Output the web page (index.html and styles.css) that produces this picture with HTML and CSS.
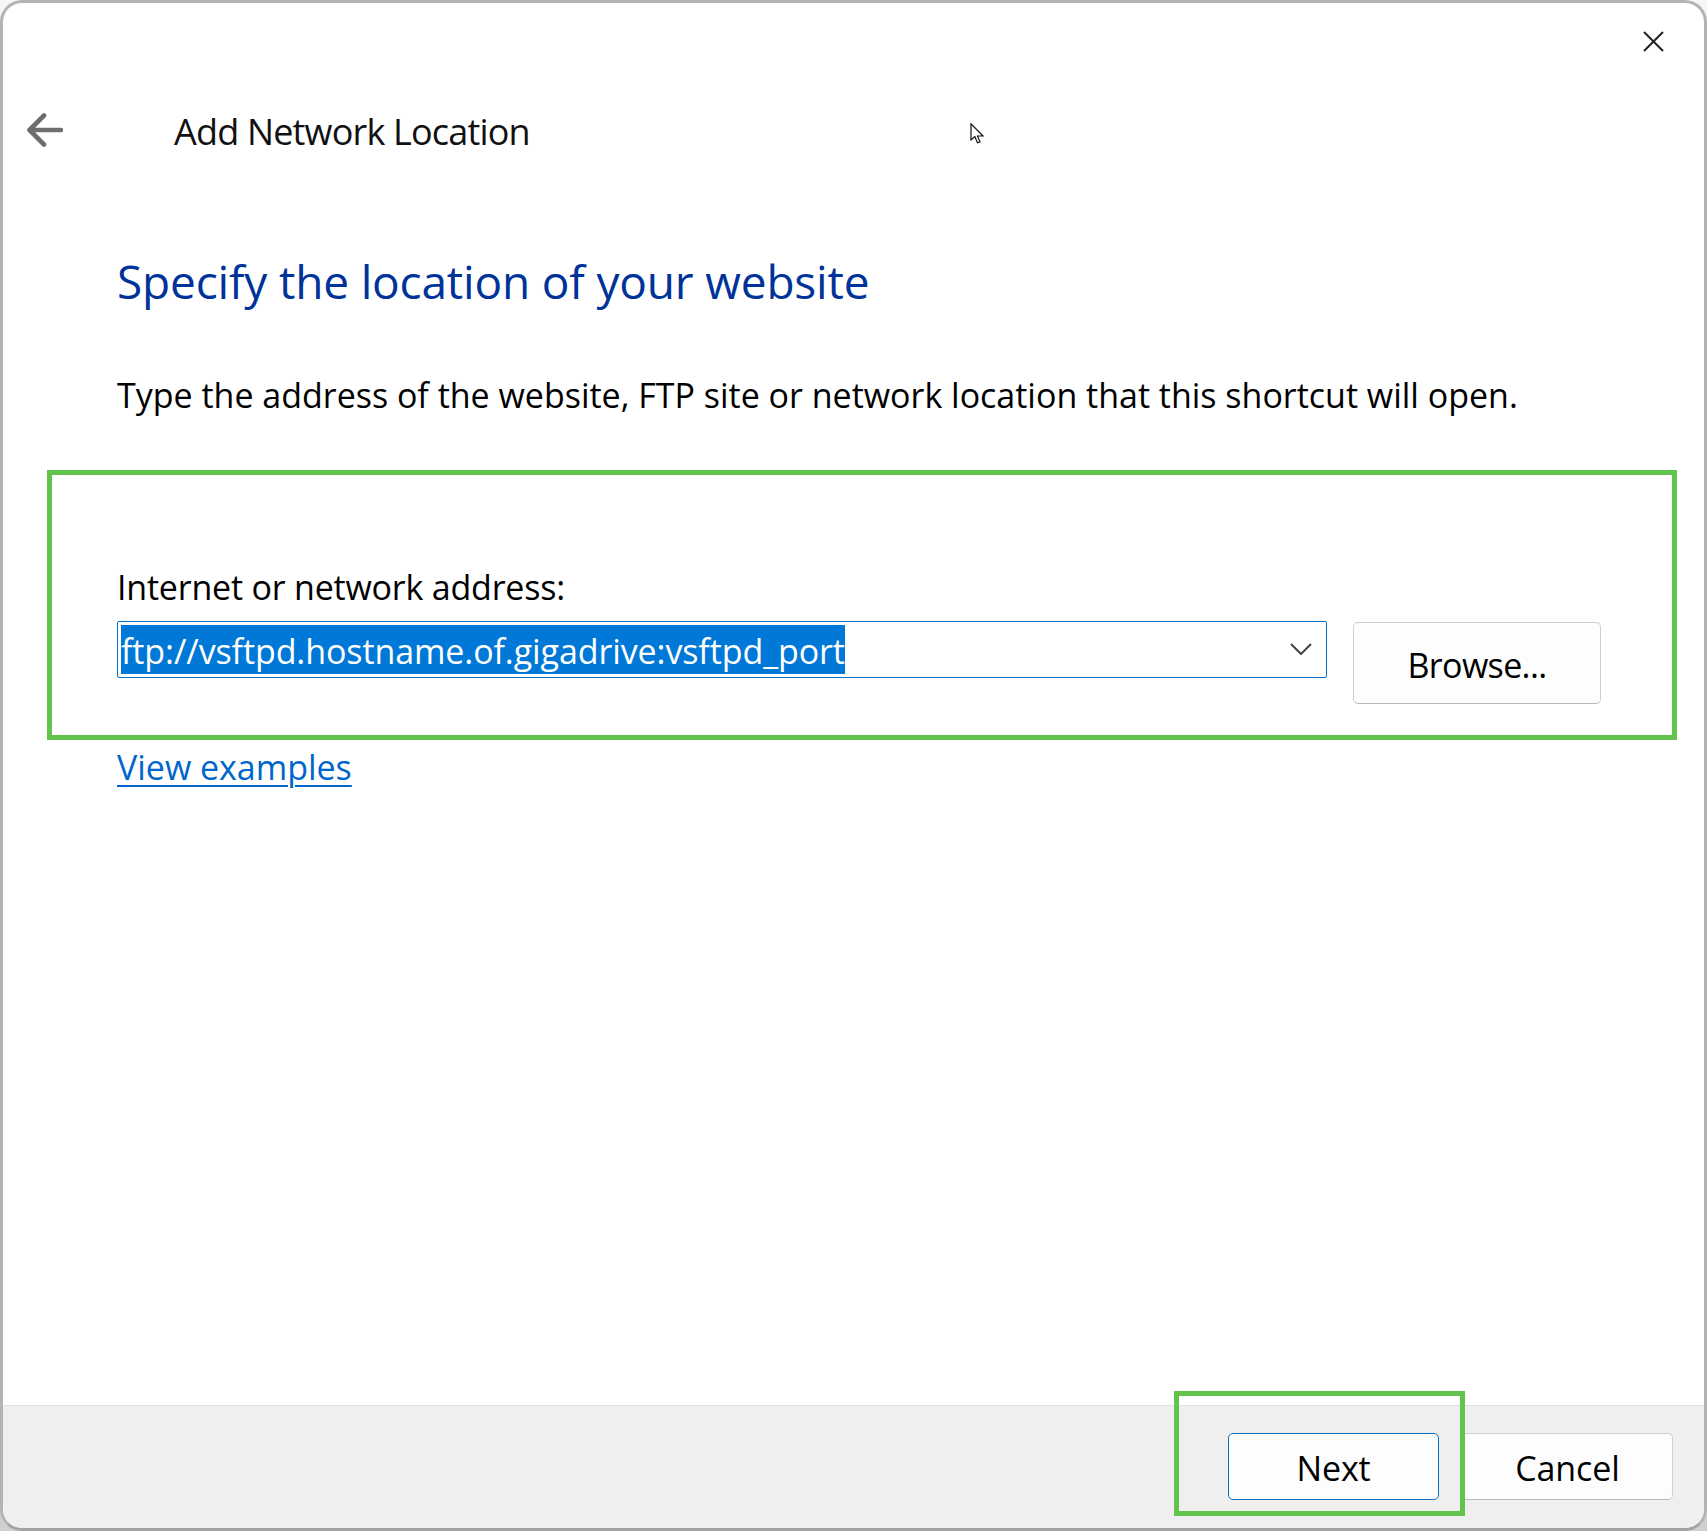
FILE: index.html
```html
<!DOCTYPE html>
<html lang="en">
<head>
<meta charset="utf-8">
<title>Add Network Location</title>
<link rel="stylesheet" href="styles.css">
</head>
<body>
<div class="window">
  <div class="titlebar">
    <svg class="close-icon" width="21" height="21" viewBox="0 0 21 21"><path d="M1 1 L20 20 M20 1 L1 20"/></svg>
  </div>
  <div class="nav">
    <svg class="back-icon" width="36" height="34" viewBox="0 0 36 34"><path d="M34 17 H3 M17 2.500 L2.500 17 L17 31.500"/></svg>
    <span class="nav-title">Add Network Location</span>
  </div>
  <main class="content">
    <h1 class="heading">Specify the location of your website</h1>
    <p class="intro">Type the address of the website, FTP site or network location that this shortcut will open.</p>
    <label class="field-label">Internet or network address:</label>
    <div class="address-row">
      <div class="combo">
        <span class="combo-text">ftp://vsftpd.hostname.of.gigadrive:vsftpd_port</span>
        <svg class="chevron" width="22" height="12" viewBox="0 0 22 12"><path d="M1 1 L11 11 L21 1"/></svg>
      </div>
      <button class="btn btn-browse">Browse...</button>
    </div>
    <a class="examples" href="#">View examples</a>
  </main>
  <footer class="footer">
    <button class="btn btn-footer btn-default">Next</button>
    <button class="btn btn-footer">Cancel</button>
  </footer>
</div>
<div class="mark mark-address"></div>
<div class="mark mark-next"></div>
<svg class="cursor" width="15" height="21" viewBox="0 0 15 21"><path d="M1 .8 V17 L4.800 13.500 L7.500 19.800 L10 18.800 L7.500 13 H13 Z"/></svg>
</body>
</html>
```
FILE: styles.css
```css
* { box-sizing: border-box; }
html, body { margin: 0; padding: 0; }
body {
  width: 1707px;
  height: 1531px;
  position: relative;
  overflow: hidden;
  background: linear-gradient(#f6f6f6, #f6f6f6 60px, #cfcfcf 1470px);
  font-family: "Open Sans", "Noto Sans", sans-serif;
  color: #000;
}
.window {
  width: 1707px;
  height: 1531px;
  display: flex;
  flex-direction: column;
  background: #fff;
  border: 3px solid #b4b4b4;
  border-bottom-color: #a2a2a2;
  border-radius: 22px;
  overflow: hidden;
}
.titlebar {
  height: 102px;
  flex: none;
  display: flex;
  justify-content: flex-end;
  padding: 28px 40px 0 0;
}
.close-icon { display: block; }
.close-icon path { stroke: #222; stroke-width: 2; fill: none; }
.nav {
  height: 50px;
  flex: none;
  display: flex;
  align-items: center;
  padding-left: 24px;
  gap: 111px;
}
.back-icon { display: block; }
.back-icon path { stroke: #6e6e6e; stroke-width: 4.600; fill: none; stroke-linecap: round; stroke-linejoin: round; }
.nav-title { font-size: 36px; line-height: 50px; letter-spacing: -0.82px; color: #111; padding-top: 4px; }
.content { flex: 1; padding-left: 114px; display: flex; flex-direction: column; align-items: flex-start; }
.heading {
  margin: 96px 0 0;
  font-size: 46px;
  line-height: 60px;
  font-weight: 400;
  color: #003399;
  letter-spacing: -0.17px;
}
.intro { margin: 60px 0 0; font-size: 34px; line-height: 48px; letter-spacing: -0.01px; white-space: nowrap; }
.field-label { margin-top: 145px; font-size: 34px; line-height: 46px; letter-spacing: -0.21px; }
.address-row { margin-top: 11px; display: flex; align-items: flex-start; gap: 26px; }
.combo {
  width: 1210px;
  height: 57px;
  border: 1.500px solid #0a6fc2;
  border-radius: 2px;
  background: #fff;
  display: flex;
  align-items: center;
  justify-content: space-between;
  padding: 0 14px 1px 3px;
}
.combo-text {
  display: block;
  height: 49px;
  line-height: 52px;
  background: #0078d7;
  color: #fff;
  font-size: 34px;
  letter-spacing: -0.1px;
  white-space: nowrap;
}
.chevron { display: block; margin-top: 0; }
.chevron path { stroke: #444; stroke-width: 2; fill: none; }
.btn {
  font-family: inherit;
  color: #000;
  background: #fdfdfd;
  border: 1.500px solid #cfcfcf;
  border-bottom-color: #b8b8b8;
  border-radius: 5px;
  padding: 0;
  font-size: 34px;
  letter-spacing: -0.1px;
}
.btn-browse { width: 248px; height: 82px; margin-top: 1px; padding-top: 4px; letter-spacing: -0.65px; }
.examples {
  margin-top: 40px;
  font-size: 34px;
  line-height: 46px;
  letter-spacing: -0.02px;
  color: #0066cc;
  text-decoration: underline;
  text-decoration-thickness: 2px;
  text-underline-offset: 5px;
}
.footer {
  height: 123px;
  flex: none;
  display: flex;
  justify-content: flex-end;
  align-items: flex-start;
  gap: 23px;
  padding: 27px 31px 0 0;
  background: #efefef;
  border-top: 1px solid #dfdfdf;
}
.btn-footer { width: 211px; height: 67px; padding-top: 3px; }
.btn-default { border-color: #0a6fc2; }
.mark { position: absolute; border: 5px solid #62c44a; }
.mark-address { left: 47px; top: 470px; width: 1630px; height: 270px; }
.mark-next { left: 1174px; top: 1391px; width: 291px; height: 125px; }
.cursor { position: absolute; left: 970px; top: 123px; }
.cursor path { fill: #fff; stroke: #111; stroke-width: 1.200; }
```
